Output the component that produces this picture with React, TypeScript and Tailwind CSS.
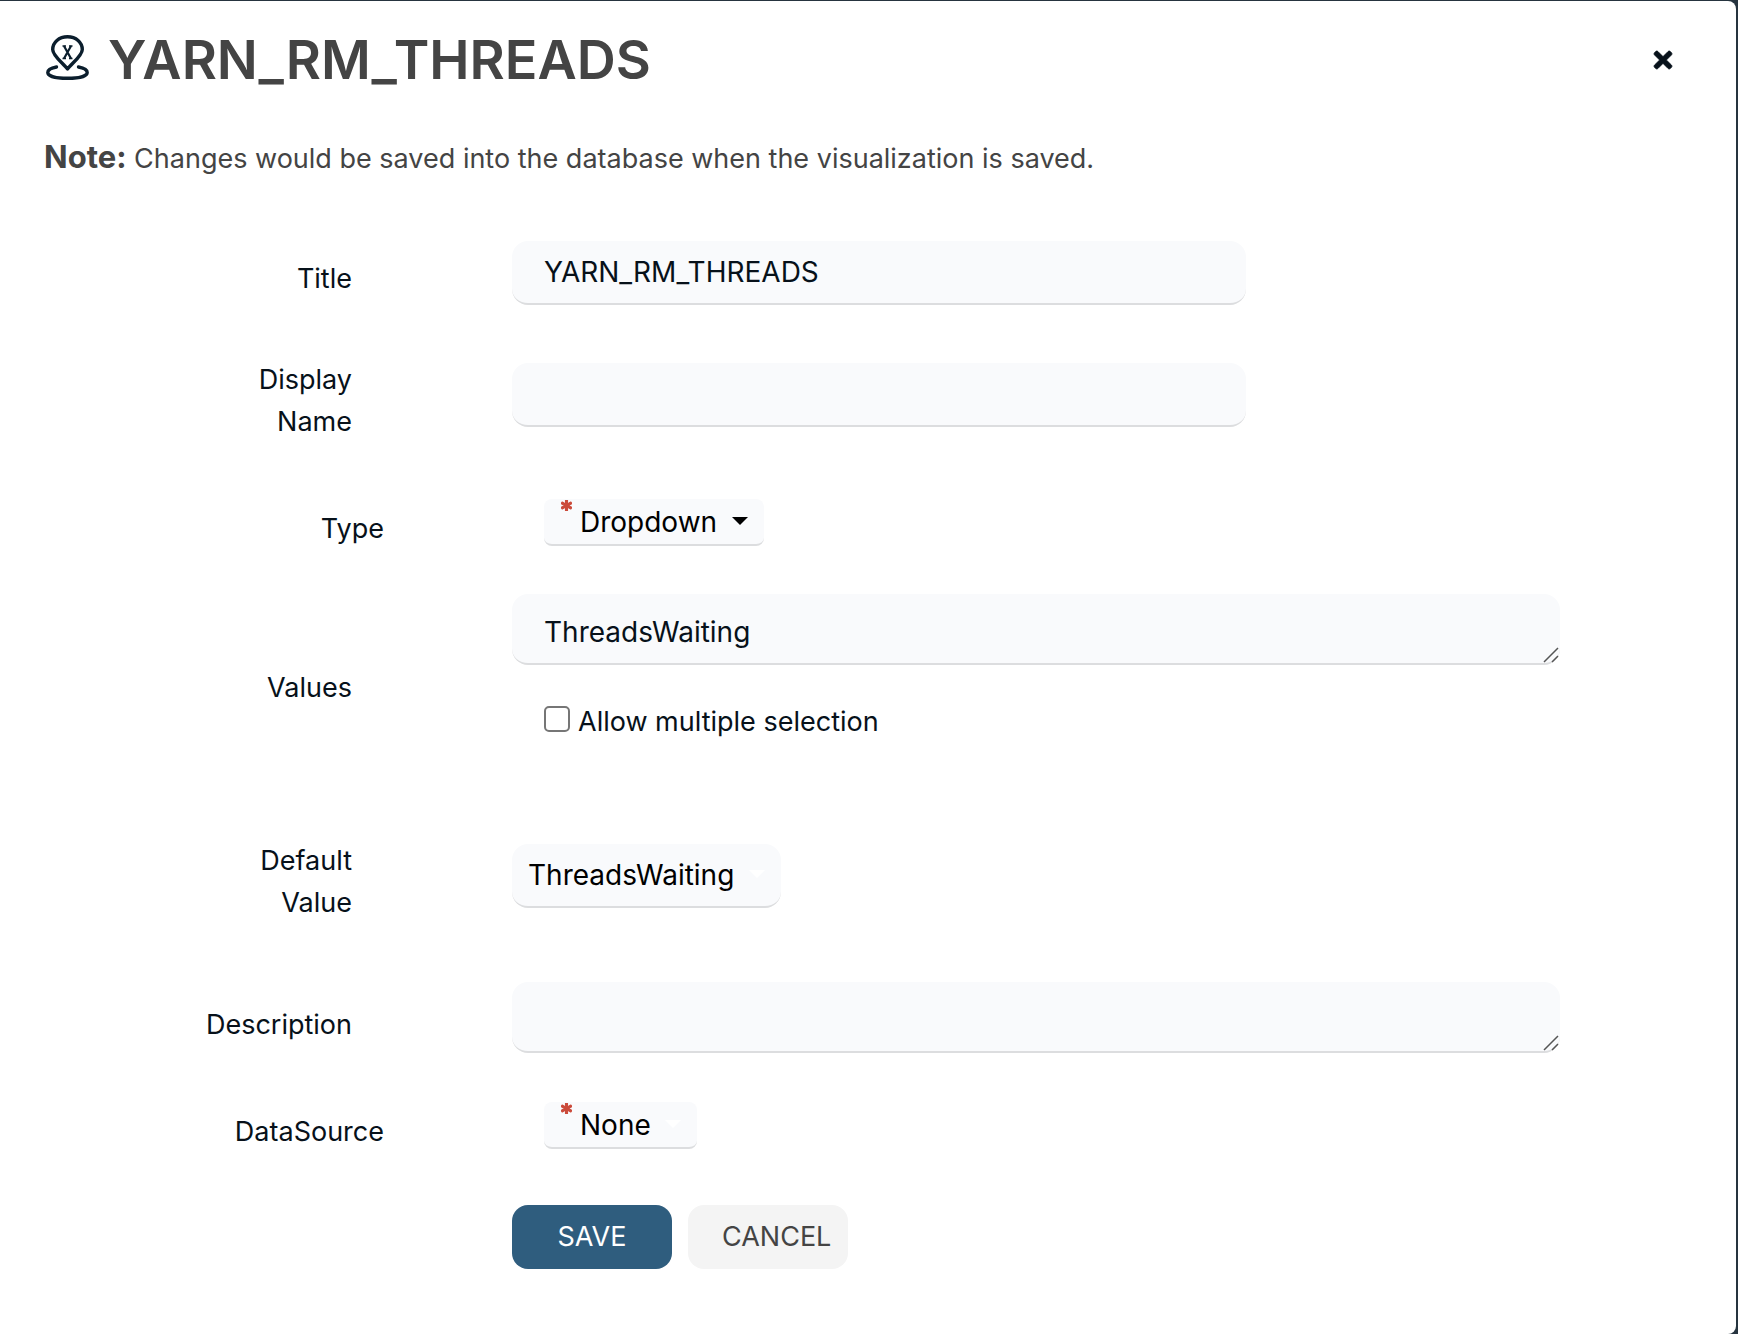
import React, { useState } from "react";
import { FaAsterisk, FaTimes } from "react-icons/fa";

interface IRowProps {
  label: string;
  htmlFor: string;
  className?: string;
  labelClassName?: string;
  children: React.ReactNode;
}

const Row: React.FunctionComponent<IRowProps> = (props) => {
  return (
    <div className={"flex items-start " + (props.className || "")}>
      <div className="w-[384px] shrink-0 flex justify-end">
        <label
          htmlFor={props.htmlFor}
          className={"block text-right text-[27px] " + (props.labelClassName || "")}
        >
          {props.label}
        </label>
      </div>
      <div className="flex-1 min-w-0 ml-32 mr-44">{props.children}</div>
    </div>
  );
};

const Caret = ({ className }: { className: string }) => (
  <svg
    viewBox="0 0 16 8"
    className={"absolute right-4 w-4 h-2 pointer-events-none " + className}
    fill="currentColor"
  >
    <path d="M0 0h16L8 8z" />
  </svg>
);

const RequiredMark = () => (
  <FaAsterisk
    size={11}
    stroke="currentColor"
    strokeWidth={60}
    className="absolute left-[17px] top-px text-[#cb4b3b]"
  />
);

const ResizeGrip = () => (
  <svg
    viewBox="0 0 16 16"
    className="absolute right-px bottom-0.5 w-4 h-4 pointer-events-none"
    stroke="#555"
    strokeWidth="1.5"
  >
    <path d="M1 15L15 1M9 15L15 9" />
  </svg>
);

const MarkerIcon = () => (
  <svg viewBox="0 0 44 46" className="w-11 h-[46px] mb-1 shrink-0" fill="none" stroke="#0b1e2d">
    <path
      d="M21.5 34C17.5 28.5 6.700 21 6.700 14.500C6.700 7.500 13 1.800 21.500 1.800C30 1.800 36.300 7.500 36.300 14.500C36.300 21 25.500 28.500 21.500 34Z"
      strokeWidth="3.400"
      strokeLinejoin="round"
    />
    <path
      d="M10.500 32C5 33 1.800 35 1.800 37.500C1.800 41.200 10.500 43.300 21.500 43.300C32.500 43.300 41.200 41.200 41.200 37.500C41.200 35 38 33 32.500 32"
      strokeWidth="3.400"
      strokeLinecap="round"
    />
    <path d="M18 11L25 23.500M25 11L18 23.500" strokeWidth="2.200" />
    <path d="M16.500 11h3.500M23 11h3.500M16.500 23.500h3.500M23 23.500h3.500" strokeWidth="1.400" />
  </svg>
);

const App: React.FunctionComponent = () => {
  const [title, setTitle] = useState("YARN_RM_THREADS");
  const [displayName, setDisplayName] = useState("");
  const [values, setValues] = useState("ThreadsWaiting");
  const [multiple, setMultiple] = useState(false);
  const [description, setDescription] = useState("");

  const handleSubmit = (event: React.FormEvent) => {
    event.preventDefault();
  };

  return (
    <div className="min-h-screen bg-[#26343f] pt-px pr-0.5 flex font-['Inter',sans-serif] text-[28px] leading-[42px] text-[#07111a]">
      <div className="flex-1 min-w-0 bg-white rounded-r-lg pb-16">
        <header className="flex items-center pl-[46px] pr-[60px] pt-6 text-[#444]">
          <MarkerIcon />
          <h1 className="flex-1 ml-[18px] text-[54px] leading-[70px] font-semibold">YARN_RM_THREADS</h1>
          <button type="button" aria-label="Close" className="text-[#07111a]">
            <FaTimes size={26} stroke="currentColor" strokeWidth={16} />
          </button>
        </header>

        <p className="pl-11 mt-[41px] text-[27px] text-[#444]">
          <strong className="text-[31px] font-bold">Note:</strong> Changes would be saved into the
          database when the visualization is saved.
        </p>

        <form onSubmit={handleSubmit} className="mt-[61px]">
          <Row label="Title" htmlFor="title" labelClassName="mr-8 pt-[17px]">
            <input
              id="title"
              type="text"
              className="block w-[70%] h-16 px-8 rounded-2xl bg-[#f9fafc] border-b-2 border-[#dcdddf]"
              value={title}
              onChange={(e) => setTitle(e.target.value)}
            />
          </Row>

          <Row label="Display Name" htmlFor="display-name" className="mt-[54px]" labelClassName="mr-8 w-32">
            <input
              id="display-name"
              type="text"
              className="block w-[70%] h-16 mt-1 px-8 rounded-2xl bg-[#f9fafc] border-b-2 border-[#dcdddf]"
              value={displayName}
              onChange={(e) => setDisplayName(e.target.value)}
            />
          </Row>

          <Row label="Type" htmlFor="type" className="mt-14" labelClassName="pt-[9px]">
            <div className="relative ml-8 w-[220px]">
              <RequiredMark />
              <select
                id="type"
                className="block appearance-none w-full h-[47px] pl-9 rounded-lg bg-[#f9fafc] border-b-2 border-[#dcdddf] text-black"
              >
                <option>Dropdown</option>
              </select>
              <Caret className="top-[18px] text-black" />
            </div>
          </Row>

          <Row label="Values" htmlFor="values" className="mt-11" labelClassName="mr-8 pt-[73px]">
            <div className="relative">
              <textarea
                id="values"
                className="block resize-none w-full h-[71px] px-8 pt-[17px] rounded-2xl bg-[#f9fafc] border-b-2 border-[#dcdddf] overflow-hidden"
                value={values}
                onChange={(e) => setValues(e.target.value)}
              />
              <ResizeGrip />
            </div>
            <div className="flex items-center ml-8 mt-9">
              <input
                id="multiple"
                type="checkbox"
                className="appearance-none w-[26px] h-[26px] mb-1.5 rounded-[5px] border-2 border-[#767676] bg-white checked:bg-[#2f5d7e]"
                checked={multiple}
                onChange={(e) => setMultiple(e.target.checked)}
              />
              <label htmlFor="multiple" className="ml-2 text-[27px]">
                Allow multiple selection
              </label>
            </div>
          </Row>

          <Row label="Default Value" htmlFor="default-value" className="mt-[97px]" labelClassName="mr-8 w-32">
            <div className="relative mt-1 w-[269px]">
              <select
                id="default-value"
                className="block appearance-none w-full h-16 pl-4 rounded-2xl bg-[#f9fafc] border-b-2 border-[#dcdddf] text-black"
              >
                <option>ThreadsWaiting</option>
              </select>
              <Caret className="top-[26px] text-white" />
            </div>
          </Row>

          <Row label="Description" htmlFor="description" className="mt-[58px]" labelClassName="mr-8 pt-[22px]">
            <div className="relative">
              <textarea
                id="description"
                className="block resize-none w-full h-[71px] px-8 pt-[17px] rounded-2xl bg-[#f9fafc] border-b-2 border-[#dcdddf] overflow-hidden"
                value={description}
                onChange={(e) => setDescription(e.target.value)}
              />
              <ResizeGrip />
            </div>
          </Row>

          <Row label="DataSource" htmlFor="data-source" className="mt-[49px]" labelClassName="pt-[9px]">
            <div className="relative ml-8 w-[153px]">
              <RequiredMark />
              <select
                id="data-source"
                className="block appearance-none w-full h-[47px] pl-9 rounded-lg bg-[#f9fafc] border-b-2 border-[#dcdddf] text-black"
              >
                <option>None</option>
              </select>
              <Caret className="top-[18px] text-white" />
            </div>
          </Row>

          <div className="flex gap-4 mt-[52px] ml-[512px] text-[27px]">
            <button type="submit" className="w-40 h-16 rounded-2xl bg-[#2f5d7e] text-white">
              SAVE
            </button>
            <button type="button" className="w-40 h-16 pl-[34px] rounded-2xl bg-[#f4f4f4] text-[#444] text-left">
              CANCEL
            </button>
          </div>
        </form>
      </div>
    </div>
  );
};

export default App;
